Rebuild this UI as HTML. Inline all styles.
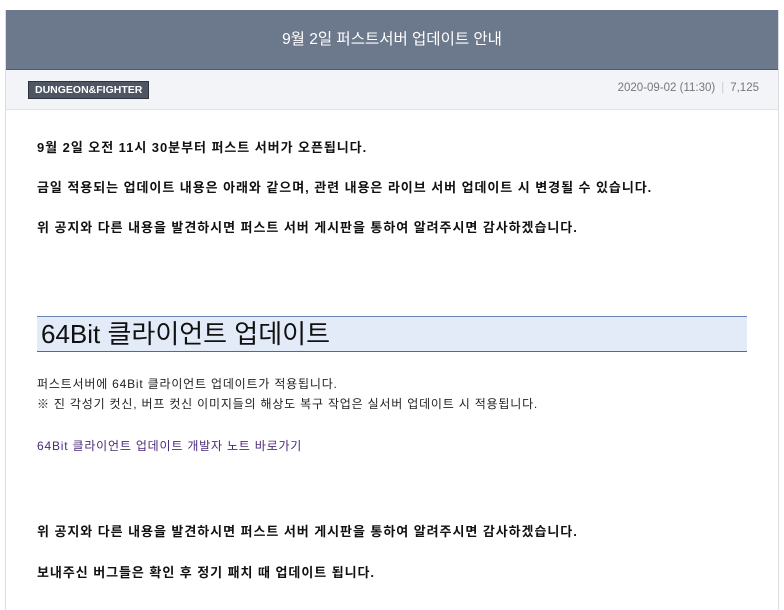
<!DOCTYPE html>
<html><head><meta charset="utf-8"><style>
body{margin:0;background:#fff;font-family:"Liberation Sans","Noto Sans CJK KR",sans-serif;}
.wrap{position:absolute;left:5px;top:10px;width:772px;height:600px;border-left:1px solid #dcdde2;border-right:1px solid #dcdde2;}
.hd{height:59px;background:#6c788b;border-bottom:1px solid #4f5a6a;color:#fff;font-size:15.5px;text-align:center;line-height:59px;}
.meta{height:39px;background:#f3f4f8;border-bottom:1px solid #e0e1e6;position:relative;}
.tag{position:absolute;left:22px;top:11px;background:#4e5563;border:1px solid #2e333c;color:#fff;font-size:10.5px;font-weight:bold;padding:1px 6px;line-height:14px;}
.info{position:absolute;right:19px;top:12px;font-size:11.5px;color:#777;}
.info span{color:#ccc;margin:0 6px;}
.b{position:absolute;left:37px;font-size:13px;font-weight:bold;color:#111;letter-spacing:0.95px;white-space:nowrap;}
.n{position:absolute;left:37px;font-size:12px;color:#222;letter-spacing:0.8px;white-space:nowrap;}
.h{position:absolute;left:37px;top:316px;width:706px;height:34px;background:#e3ebf8;border-top:1px solid #6b85b5;border-bottom:1px solid #4a6aa0;font-size:26px;color:#111;line-height:34px;padding-left:4px;}
</style></head><body>
<div class="wrap">
<div class="hd">9월 2일 퍼스트서버 업데이트 안내</div>
<div class="meta"><div class="tag">DUNGEON&amp;FIGHTER</div><div class="info">2020-09-02 (11:30)<span>|</span>7,125</div></div>
</div>
<div class="b" style="top:137px">9월 2일 오전 11시 30분부터 퍼스트 서버가 오픈됩니다.</div>
<div class="b" style="top:177px">금일 적용되는 업데이트 내용은 아래와 같으며, 관련 내용은 라이브 서버 업데이트 시 변경될 수 있습니다.</div>
<div class="b" style="top:217px">위 공지와 다른 내용을 발견하시면 퍼스트 서버 게시판을 통하여 알려주시면 감사하겠습니다.</div>
<div class="h">64Bit 클라이언트 업데이트</div>
<div class="n" style="top:375px">퍼스트서버에 64Bit 클라이언트 업데이트가 적용됩니다.</div>
<div class="n" style="top:395px">※ 진 각성기 컷신, 버프 컷신 이미지들의 해상도 복구 작업은 실서버 업데이트 시 적용됩니다.</div>
<div class="n" style="top:437px;color:#4b2a7a">64Bit 클라이언트 업데이트 개발자 노트 바로가기</div>
<div class="b" style="top:521px">위 공지와 다른 내용을 발견하시면 퍼스트 서버 게시판을 통하여 알려주시면 감사하겠습니다.</div>
<div class="b" style="top:562px">보내주신 버그들은 확인 후 정기 패치 때 업데이트 됩니다.</div>
</body></html>
